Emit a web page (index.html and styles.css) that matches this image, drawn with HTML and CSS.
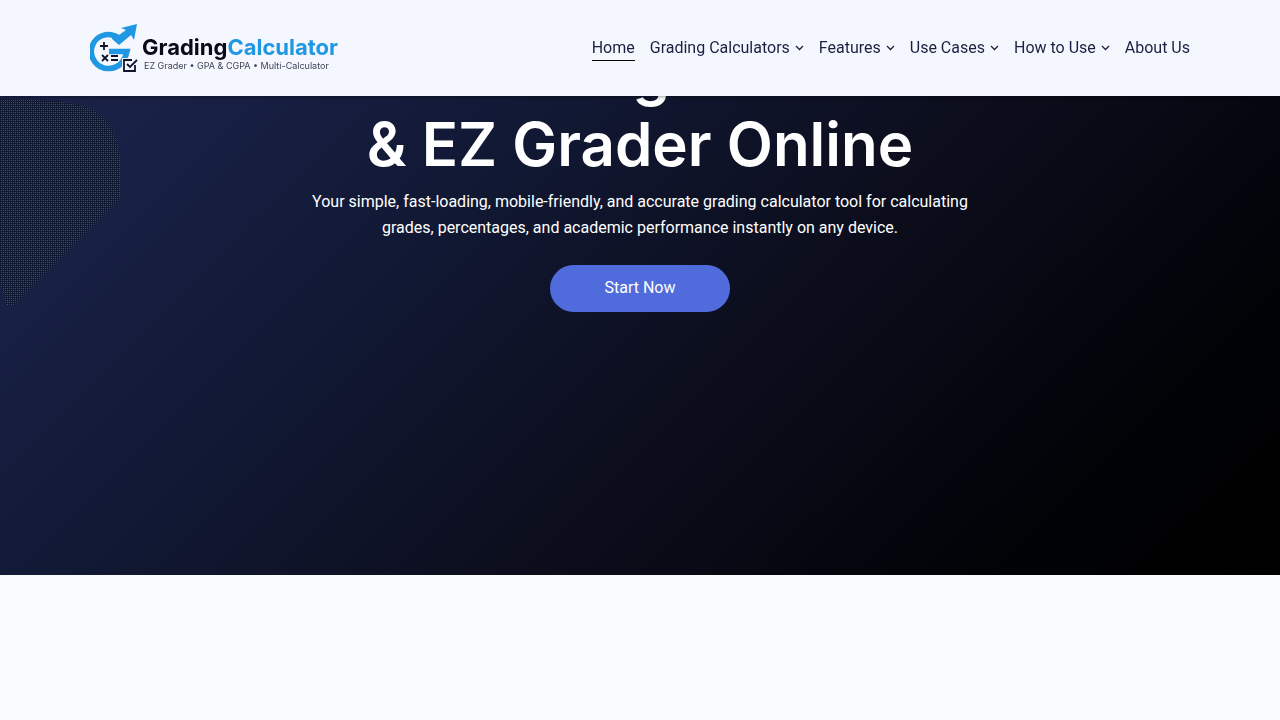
FILE: index.html
```html
<!DOCTYPE html>
<html lang="en">
<head>
    <meta charset="UTF-8">
    <meta name="viewport" content="width=device-width, initial-scale=1">
    <title>Grading Calculator</title>
    <link rel="stylesheet" href="styles.css">
</head>
<body>
    <header class="site-header">
        <a class="logo" href="#">
            <svg class="logo-mark" viewBox="0 0 48 48" width="48" height="48" aria-hidden="true">
                <path d="M28 13.500A17 17 0 1 0 19 44.500Q33 44 37 27.500H19" fill="none" stroke="#1f97e3" stroke-width="5.500"/>
                <path d="M24 9L29 11L36 6L31 4L47 0L44 16L41 11L29 21L22 15Z" fill="#1f97e3"/>
                <path d="M14 18v8M10 22h8M12 31l6 6M18 31l-6 6M21 32h7M21 36h7" stroke="#12142e" stroke-width="1.800"/>
                <rect x="32" y="34" width="13" height="14" fill="#f4f7fe"/>
                <path d="M42 36H34v11h11v-6M37 40l3 3 7-7" fill="none" stroke="#12142e" stroke-width="1.800"/>
            </svg>
            <span class="logo-text">
                <span class="logo-name">Grading<span class="logo-blue">Calculator</span></span>
                <span class="logo-tag">EZ Grader • GPA &amp; CGPA • Multi-Calculator</span>
            </span>
        </a>
        <nav class="main-nav">
            <a class="active" href="#">Home</a>
            <a href="#">Grading Calculators <svg class="chevron" viewBox="0 0 9 6"><path d="M1 1l3.500 3.500L8 1"/></svg></a>
            <a href="#">Features <svg class="chevron" viewBox="0 0 9 6"><path d="M1 1l3.500 3.500L8 1"/></svg></a>
            <a href="#">Use Cases <svg class="chevron" viewBox="0 0 9 6"><path d="M1 1l3.500 3.500L8 1"/></svg></a>
            <a href="#">How to Use <svg class="chevron" viewBox="0 0 9 6"><path d="M1 1l3.500 3.500L8 1"/></svg></a>
            <a href="#">About Us</a>
        </nav>
    </header>

    <main>
        <section class="hero">
            <!-- dotted shape on the left edge -->
            <svg class="hero-shape" viewBox="0 0 120 210" width="120" height="210" aria-hidden="true">
                <defs>
                    <pattern id="dots" width="4" height="4" patternUnits="userSpaceOnUse">
                        <path d="M1 0h1v1h-1zM3 2h1v1h-1z" fill="#465064"/>
                        <path d="M3 0h1v1h-1zM1 2h1v1h-1z" fill="#3a445a"/>
                    </pattern>
                </defs>
                <path d="M0 1L60 3L90 10Q112 22 117 45L120 57V100L12 208L7 207L0 185Z" fill="#101a32"/>
                <path d="M0 1L60 3L90 10Q112 22 117 45L120 57V100L12 208L7 207L0 185Z" fill="url(#dots)"/>
            </svg>
            <h1>Free Grading Calculator<br>&amp; EZ Grader Online</h1>
            <p>Your simple, fast-loading, mobile-friendly, and accurate grading calculator tool for calculating grades, percentages, and academic performance instantly on any device.</p>
            <a class="start-btn" href="#">Start Now</a>
        </section>
    </main>
</body>
</html>
```

FILE: styles.css
```css
* {
    box-sizing: border-box;
}
body {
    margin: 0;
    font-family: Roboto, "Liberation Sans", sans-serif;
    font-size: 16px;
    background-color: #f9fbfd;
    color: #1b2042;
}
a {
    color: inherit;
    text-decoration: none;
}
.site-header {
    position: fixed;
    top: 0;
    left: 0;
    right: 0;
    z-index: 10;
    display: flex;
    align-items: center;
    justify-content: space-between;
    height: 96px;
    padding: 0 max(20px, calc(50% - 550px));
    background-color: #f4f7fe;
    box-shadow: 0 1px 4px rgba(0, 0, 0, 0.4);
}
.logo {
    display: flex;
    align-items: center;
    gap: 4px;
}
.logo-mark {
    display: block;
}
.logo-text {
    display: flex;
    flex-direction: column;
    padding-top: 10px;
    font-family: Inter, sans-serif;
    white-space: nowrap;
}
.logo-name {
    font-size: 22px;
    line-height: 26px;
    font-weight: 700;
    color: #080a18;
}
.logo-blue {
    color: #1f97e3;
}
.logo-tag {
    padding-left: 2px;
    font-size: 9px;
    line-height: 12px;
    color: #3f4356;
}
.main-nav {
    display: flex;
    gap: 15px;
}
.main-nav a {
    display: flex;
    align-items: center;
    gap: 5px;
    line-height: 24px;
    border-bottom: 1px solid transparent;
    white-space: nowrap;
}
.main-nav .active {
    border-color: #000;
}
.chevron {
    width: 9px;
    height: 6px;
    fill: none;
    stroke: #1b2042;
    stroke-width: 1.3px;
}
.hero {
    position: relative;
    padding: 36px 20px 263px;
    text-align: center;
    color: #fff;
    background: linear-gradient(135deg, #1a2248 0%, #182045 16%, #111833 36%, #0c0e1d 58%, #04060e 76%, #010204 86%, #000 100%);
}
.hero-shape {
    position: absolute;
    top: 98px;
    left: 0;
}
h1 {
    margin: 0 0 9px;
    font-family: Inter, "Open Sans", sans-serif;
    font-size: 60px;
    line-height: 72px;
    font-weight: 600;
}
.hero p {
    max-width: 680px;
    margin: 0 auto 24px;
    line-height: 26px;
}
.start-btn {
    display: block;
    width: 180px;
    margin: 0 auto;
    padding-bottom: 2px;
    line-height: 45px;
    border-radius: 24px;
    background-color: #506cdc;
}
```
